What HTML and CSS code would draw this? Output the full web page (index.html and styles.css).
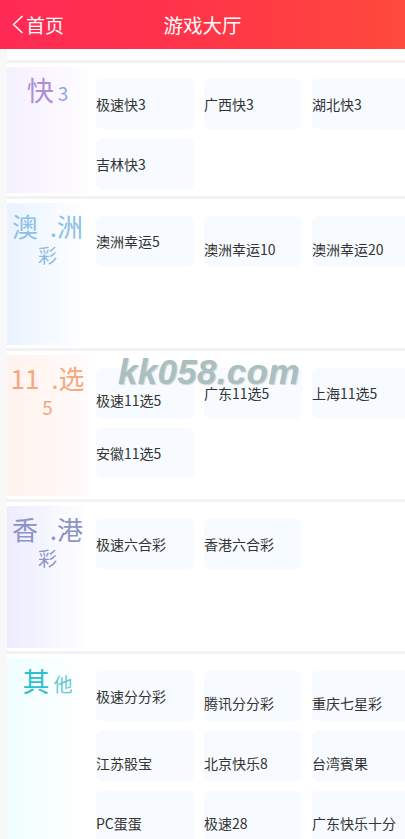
FILE: index.html
```html
<!DOCTYPE html>
<html lang="zh-CN">
<head>
  <meta charset="UTF-8" />
  <meta name="viewport" content="width=device-width, initial-scale=1.0" />
  <title>游戏大厅</title>
  <link rel="stylesheet" href="styles.css">
</head>
<body>
  <header class="topbar">
    <a class="back" href="#">
      <svg width="12" height="19" viewBox="0 0 12 19"><polyline points="10.5,1 1.5,9.5 10.5,18" fill="none" stroke="#fff" stroke-width="1.4" /></svg>
      <span>首页</span>
    </a>
    <h1>游戏大厅</h1>
  </header>

  <main class="hall">
    <div class="spacer"></div>

    <section class="group k3">
      <div class="tag short">
        <div class="line"><span class="big">快</span><span class="small">3</span></div>
      </div>
      <div class="games">
        <div class="game">极速快3</div>
        <div class="game">广西快3</div>
        <div class="game">湖北快3</div>
        <div class="game">吉林快3</div>
      </div>
    </section>

    <section class="group au">
      <div class="tag">
        <div class="line">澳 .洲</div>
        <div class="sub">彩</div>
      </div>
      <div class="games">
        <div class="game">澳洲幸运5</div>
        <div class="game low">澳洲幸运10</div>
        <div class="game low">澳洲幸运20</div>
      </div>
    </section>

    <section class="group x5">
      <div class="tag">
        <div class="line">11 .选</div>
        <div class="sub">5</div>
      </div>
      <div class="games">
        <div class="game low">极速11选5</div>
        <div class="game">广东11选5</div>
        <div class="game">上海11选5</div>
        <div class="game">安徽11选5</div>
      </div>
    </section>

    <section class="group hk">
      <div class="tag">
        <div class="line">香 .港</div>
        <div class="sub">彩</div>
      </div>
      <div class="games">
        <div class="game">极速六合彩</div>
        <div class="game">香港六合彩</div>
      </div>
    </section>

    <section class="group other">
      <div class="tag">
        <div class="line"><span class="big">其</span><span class="small">他</span></div>
      </div>
      <div class="games">
        <div class="game">极速分分彩</div>
        <div class="game low">腾讯分分彩</div>
        <div class="game low">重庆七星彩</div>
        <div class="game low">江苏骰宝</div>
        <div class="game low">北京快乐8</div>
        <div class="game low">台湾賓果</div>
        <div class="game low">PC蛋蛋</div>
        <div class="game low">极速28</div>
        <div class="game low">广东快乐十分</div>
      </div>
    </section>
  </main>

  <div class="watermark">kk058.com</div>
</body>
</html>
```

FILE: styles.css
```css
html, body {
  margin: 0;
  background-color: #f8f8f8;
  overflow-x: hidden;
}

body {
  font-family: "Noto Sans CJK SC", "Noto Sans", sans-serif;
  color: #333;
  position: relative;
}

.topbar {
  height: 49px;
  background: linear-gradient(90deg, #ff2a55 0%, #ff3548 50%, #ff4a3c 100%);
  display: flex;
  align-items: center;
  justify-content: center;
  position: relative;
  color: #fff;
}

.topbar h1 {
  margin: 0;
  font-size: 19.5px;
  font-weight: normal;
  line-height: 1;
}

.back {
  position: absolute;
  left: 12px;
  top: 0;
  height: 49px;
  display: flex;
  align-items: center;
  gap: 2px;
  color: #fff;
  text-decoration: none;
  font-size: 19px;
}

.back svg { margin-top: -1px; }

.hall {
  margin-left: 7px;
  width: 403px;
  background: #fff;
}

.spacer { height: 11px; }

.group {
  display: flex;
  gap: 8px;
  border-top: 3px solid #f2f2f2;
  padding: 4px 0 3px;
  background: #fff;
}

.tag {
  flex: 0 0 81px;
  min-height: 141.5px;
  padding-top: 7px;
  box-sizing: border-box;
  text-align: center;
}

.tag.short { min-height: 126px; }

.tag .line {
  font-size: 26px;
  line-height: 32px;
  white-space: nowrap;
  word-spacing: 6px;
}

.tag .sub {
  font-size: 19px;
  line-height: 26px;
}

.tag .big { font-size: 27px; }
.tag .small { font-size: 19px; margin-left: 4px; }

.k3 .tag { background: linear-gradient(90deg, #f5f0ff, #fefdff); }
.k3 .big { color: #ad8fd6; }
.k3 .small { color: #8fa4e6; }

.au .tag { background: linear-gradient(90deg, #e9f3ff, #ffffff); color: #8ebfe7; }
.au .sub { color: #8db8e0; }

.x5 .tag { background: linear-gradient(90deg, #fff3ed, #fffbfb); color: #f5a77d; }

.hk .tag { background: linear-gradient(90deg, #ececff, #ffffff); color: #8c93c5; }

.other .tag { background: linear-gradient(90deg, #effffe, #ffffff); }
.other .big { color: #2fbfca; }
.other .small { color: #62c9d0; }

.games {
  display: grid;
  grid-template-columns: repeat(3, 98px);
  grid-auto-rows: 50px;
  gap: 10px;
  padding-top: 13px;
  align-content: start;
}

.k3 .games { padding-top: 12px; }

.game {
  background: #f7fbff;
  border-radius: 5px;
  display: flex;
  align-items: center;
  font-size: 14px;
  line-height: 20px;
  white-space: nowrap;
  color: #333;
}

.game.low { padding-top: 15px; box-sizing: border-box; }

.watermark {
  position: absolute;
  left: 118px;
  top: 352px;
  font-family: "Liberation Sans", sans-serif;
  font-size: 35px;
  font-weight: bold;
  font-style: italic;
  color: #aabfbf;
  text-shadow: 1px 1px 1px rgba(80, 90, 90, 0.25);
  letter-spacing: 0.3px;
  pointer-events: none;
}
```
